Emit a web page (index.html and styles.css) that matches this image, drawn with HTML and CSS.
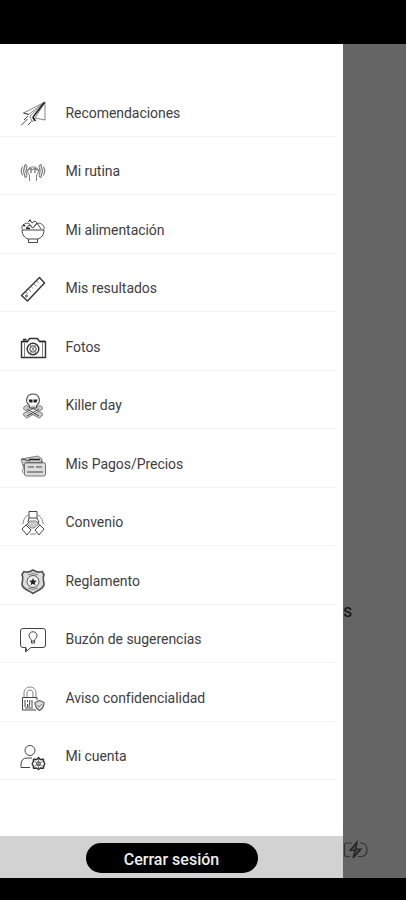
FILE: index.html
```html
<!DOCTYPE html>
<html lang="es">
<head>
<meta charset="utf-8">
<title>Menú</title>
<link rel="stylesheet" href="styles.css">
</head>
<body>
<div class="screen">
  <div class="status-bar"></div>
  <div class="app">
    <aside class="drawer">
      <nav class="menu">
        <a class="item"><svg class="icon" viewBox="0 0 28 28"><path d="M26 2 4.500 13l5 1.500zM26 2v18l-10-2zM26 2 11 16l2 6 3-4"/><path class="bold" d="M25.500 2.500 14 17M13.500 17l3 4"/><path class="strong" d="M4.500 13l5.500 1.500M2.500 25l6-6M9 25l3-3M5 20l4-4"/></svg><span class="label">Recomendaciones</span></a>
        <a class="item"><svg class="icon" viewBox="0 0 28 28"><path class="gray-line" d="M3.500 8.500q-3 4.500 0 9M6 6.500q-3 6.500 0 13 2 0 2-2-2-4.500 0-9 0-2-2-2zM24.500 8.500q3 4.500 0 9M22 6.500q3 6.500 0 13-2 0-2-2 2-4.500 0-9 0-2 2-2z"/><path d="M10.500 23v-6l-2-3c0-3 2-5 4-5h3c2 0 4 2 4 5l-2 3v6"/><path class="strong" d="M8.500 12.500l3-2.500 2 2 2-2 4 2.500M12 11v4M16 11v4"/></svg><span class="label">Mi rutina</span></a>
        <a class="item"><svg class="icon" viewBox="0 0 28 28"><path class="strong" d="M3 13h22c0 5-3 8-6 9H9c-3-1-6-4-6-9zM9.500 22v3.500h9V22"/><path class="strong" d="M3.500 12.500c-2-3 1-5 3-6 3-1 5 1 6 3M24.500 12.500c2-3-1-5-3-6-3-1-5 1-6 3M7 12l3-4 4 3 4-5 4 6M9 5l2-2 2 3 3-2 2 2"/><path class="bold" d="M10 3.500h2M7 11l4 .5M4 8l2 1"/></svg><span class="label">Mi alimentación</span></a>
        <a class="item"><svg class="icon" viewBox="0 0 28 28"><path class="heavy" d="M20.500 2.500 25.500 8 8.500 26l-6-5.500z"/><path d="M7 17l2 2M9.500 14l2.500 3M12 11.500l2 2M14.500 8.500l3 3M17.500 6l2 2"/><circle class="strong" cx="7.500" cy="21" r="1"/></svg><span class="label">Mis resultados</span></a>
        <a class="item"><svg class="icon" viewBox="0 0 28 28"><path class="heavy" d="M2.500 7.500h6l2-3h8l2 3h6v16h-24z"/><path class="bold" d="M4 5.500h3.500M21 7.500h5M3 7.500h6"/><circle class="heavy" cx="14" cy="15" r="5.800"/><circle class="strong" cx="14" cy="15" r="3.200"/><path d="M5.500 9v14M23.500 9v14M11 10.500l6 9M17 10.500l-6 9"/></svg><span class="label">Fotos</span></a>
        <a class="item"><svg class="icon" viewBox="0 0 28 28"><path class="gray" d="M5 15c-1 2 0 3 1 3l14 8c1 0 2-1 2-2 2 0 2-2 1-3L8 14c0-1-2-1-3 1zM23 15c1 2 0 3-1 3L8 26c-1 0-2-1-2-2-2 0-2-2-1-3l15-7c0-1 2-1 3 1z"/><path class="strong" d="M8 17l12 7M20 17 8 24"/><path class="skull" d="M10 13c-4-3-3-11 4-11s8 8 4 11l-1 3h-6z"/><path class="fill" d="M9.500 7.500h4v3h-3zM14.500 7.500h4l-1 3h-3z"/><path d="M13 13.500V16M15 13.500V16"/></svg><span class="label">Killer day</span></a>
        <a class="item"><svg class="icon" viewBox="0 0 28 28"><path class="gray" d="M2 8 19 5l4 3v3L4 15z"/><path class="bold" d="M10 8.500h11"/><path class="strong" d="M3 8l8 2"/><path d="M5 13 3.500 21l2 2"/><rect class="paper" x="5.500" y="11.500" width="21" height="13.500" rx="2"/><path class="strong" d="M9 16h6M17 16h6M8 21h16"/><path d="M7 12h17l-2-3"/></svg><span class="label">Mis Pagos/Precios</span></a>
        <a class="item"><svg class="icon" viewBox="0 0 28 28"><path class="strong" d="M10 2.500h8V9h-8zM10 9l-1 4 4 5 2 0 5-5-2-4M3 20l4-4 5 5-4 5zM25 20l-4-4-5 5 4 5z"/><path class="gray" d="M11 12h6l3 3-5 4h-3l-4-4z"/><path d="M9 6c-3 2-5 5-5 9M19 6c3 2 5 5 5 9M11 25h6M7 16l3-3M21 16l-3-3"/></svg><span class="label">Convenio</span></a>
        <a class="item"><svg class="icon" viewBox="0 0 28 28"><path class="shield" d="M5 3.500c3 1.500 6 .5 9-1.500 3 2 6 3 9 1.500l2 3c-2 4 0 6 0 10-1 5-7 6-11 9-4-3-10-4-11-9 0-4 2-6 0-10z"/><circle class="ring" cx="14" cy="13.500" r="6"/><path class="fill" d="m14 10 1 2.500 2.800.2-2 1.700.6 2.800-2.400-1.500-2.400 1.500.6-2.800-2-1.700 2.800-.2z"/><path d="M9 7q5-3 10 0M9 20q5 3 10 0"/></svg><span class="label">Reglamento</span></a>
        <a class="item"><svg class="icon" viewBox="0 0 28 28"><path class="strong" d="M4 2.500h20q2.500 0 2.500 2.500v14q0 2.500-2.500 2.500H12L6.500 26l.5-4.500H4Q1.500 21.500 1.500 19V5Q1.500 2.500 4 2.500z"/><path class="strong" d="M12.500 15c0-2-2.500-3-2.500-5.500C10 4.500 18 4.500 18 9.500c0 2.500-2.500 3.500-2.500 5.500v2h-3zM12.500 15h3"/><path class="bold" d="M7 22.500v2"/></svg><span class="label">Buzón de sugerencias</span></a>
        <a class="item"><svg class="icon" viewBox="0 0 28 28"><path d="M5 12.500V8c0-8 12-8 12 0v4.500M8 12.500V8c0-4 6-4 6 0v4.500"/><path class="strong" d="M17 25H3.500V12.500H18V15"/><path class="strong" d="M6 15v7M8.500 15v2M8.500 19v3M11 15l-1 7M13 15v7M6 23h8"/><path class="shackle" d="m20.500 15.500 4.500 2c0 4-1 6-4.500 8-3.500-2-4.500-4-4.500-8z"/><path d="m18.500 20 1.500 2 3-3"/></svg><span class="label">Aviso confidencialidad</span></a>
        <a class="item"><svg class="icon" viewBox="0 0 28 28"><circle class="strong" cx="11" cy="7.500" r="5"/><path class="strong" d="M11 24.500H2V22q0-7 6-7h5"/><path class="heavy" d="m19.500 14.500 1.700 2 3.300-.2.300 2.700 1 1.700-1 2-.3 2.500-3.300-.2-1.700 1.500-1.700-1.500-3.300.2-.3-2.500-1-2 1-1.700.3-2.700 3.300.2z"/><circle class="strong" cx="19.500" cy="20.700" r="2"/><path d="m15 18 9 5.500M24 18l-9 5.500M19.500 15.500v10"/></svg><span class="label">Mi cuenta</span></a>
      </nav>
      <footer class="drawer-footer"><button class="logout">Cerrar sesión</button></footer>
    </aside>
    <main class="backdrop">
      <p class="heading-end">s</p>
      <div class="tabs"><svg class="battery" viewBox="0 0 26 20"><path d="M9 3H4Q1.500 3 1.500 5v9q0 2.500 2.500 2.500h3M17 3h2q5 1 5 6.800T19 16.500h-4"/><path class="bolt" d="M14 2 7 10.500h5L10 18l8-9h-5z"/></svg></div>
    </main>
  </div>
  <div class="nav-bar"></div>
</div>
</body>
</html>
```
FILE: styles.css
```css
* { box-sizing: border-box; }
body { margin: 0; background: #000; font-family: Roboto, sans-serif; }
.screen { width: 406px; height: 900px; display: flex; flex-direction: column; overflow: hidden; }
.status-bar { height: 44px; background: #000; }
.app { height: 833.5px; display: flex; }
.nav-bar { flex: 1; background: #000; }
.drawer { width: 343px; display: flex; flex-direction: column; background: #fff; }
.menu { flex: 1; padding-top: 34px; }
.item {
  height: 58.5px;
  width: 335px;
  padding: 12px 0 0 19px;
  display: flex;
  align-items: center;
  gap: 18.500px;
  border-bottom: 1px solid #f2f2f2;
}
.label { font-size: 14px; line-height: 20px; letter-spacing: -.04px; color: #404040; margin-top: 0; white-space: nowrap; }
.icon { width: 28px; height: 28px; margin-top: 2px; flex: none; fill: none; stroke: #666; stroke-width: .8; stroke-linejoin: round; }
.icon .strong { stroke: #444; stroke-width: 1; }
.icon .heavy { stroke: #333; stroke-width: 1.4; }
.icon .bold { stroke: #222; stroke-width: 1.5; }
.icon .fill { fill: #222; stroke: none; }
.icon .gray { fill: #ccc; }
.icon .gray-line { fill: #ddd; stroke: #555; }
.icon .skull { fill: #fff; stroke: #444; stroke-width: 1.1; }
.icon .paper { fill: #ddd; stroke: #555; }
.icon .shield { fill: #ddd; stroke: #555; stroke-width: 1.7; }
.icon .ring { fill: #eee; stroke: #555; stroke-width: 1; }
.icon .shackle { fill: #ddd; stroke: #666; stroke-width: 1.3; }
.drawer-footer { height: 42px; padding-top: 3px; background: #d2d2d2; display: flex; align-items: center; justify-content: center; }
.logout {
  width: 172px;
  height: 30px;
  padding: 3px 0 0;
  border: 0;
  border-radius: 15px;
  background: #000;
  color: #eee;
  font: 500 16px/20px Roboto, sans-serif;
}
.backdrop { flex: 1; background: #656565; display: flex; flex-direction: column; justify-content: space-between; }
.heading-end { margin: 557px 0 0; font-size: 18px; line-height: 20px; color: #111; font-weight: 400; }
.tabs { height: 54px; border-top: 1px solid #616161; padding-top: 15px; }
.battery { display: block; width: 26px; height: 20px; fill: none; stroke: #333; stroke-width: 1.2; }
.battery .bolt { fill: #444; stroke: #222; }
```
